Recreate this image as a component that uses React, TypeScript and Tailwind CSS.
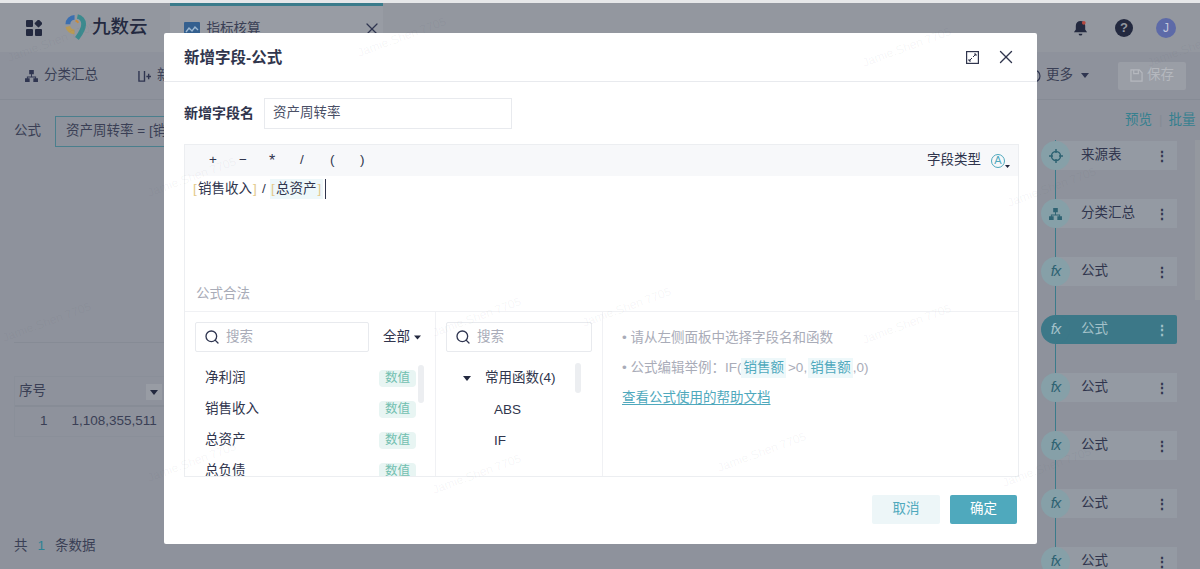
import { Search, X } from "lucide-react";

const font = "font-['Liberation_Sans','Noto_Sans_CJK_SC',sans-serif]";

const marks = [
  [5, 30], [355, 25], [860, 35], [1145, 35],
  [145, 165], [1005, 175],
  [0, 310], [430, 305], [580, 295], [860, 312],
  [145, 450], [715, 440], [430, 462], [1000, 455],
];

function Watermarks() {
  return (
    <>
      {marks.map(([x, y], i) => (
        <span
          key={i}
          className="absolute z-20 -rotate-[20deg] text-[12px] whitespace-nowrap text-[#2f3550]/[0.05] pointer-events-none"
          style={{ left: x, top: y }}
        >
          Jamie.Shen 7705
        </span>
      ))}
    </>
  );
}

function Caret({ className = "" }: { className?: string }) {
  return (
    <svg viewBox="0 0 10 6" className={"w-2 h-[5px] " + className}>
      <path d="M0 0h10L5 6z" fill="currentColor" />
    </svg>
  );
}

function Logo() {
  return (
    <svg viewBox="0 0 22 28" className="w-[21px] h-[27px]">
      <path d="M10 3.500a7 7 0 0 0-7 7" fill="none" stroke="#3b6fb0" strokeWidth="5" />
      <path d="M3 13a7 7 0 0 0 7 5.500" fill="none" stroke="#b89a55" strokeWidth="5" />
      <path d="M13 2.500a8 8 0 0 1 6.500 8c0 6-4 11-7 15" fill="none" stroke="#3c8a8e" strokeWidth="5" />
      <path d="M11 7a4 4 0 0 1 3 2" fill="none" stroke="#c98a3a" strokeWidth="2" />
    </svg>
  );
}

function Header() {
  return (
    <div className="h-[49px] bg-[#93979f] flex items-center pl-[26px] pr-[24px] shrink-0">
      <svg viewBox="0 0 16 16" className="w-4 h-4 text-[#23293f]">
        <rect x="0" y="0" width="7" height="7" rx="1" fill="currentColor" />
        <rect x="9.500" y="0.500" width="6" height="6" rx="1" fill="currentColor" transform="rotate(45 12.5 3.5)" />
        <rect x="0" y="9" width="7" height="7" rx="1" fill="currentColor" />
        <rect x="9" y="9" width="7" height="7" rx="1" fill="currentColor" />
      </svg>
      <div className="ml-[23px] flex items-center gap-[6px]">
        <Logo />
        <span className="text-[18.500px] leading-none text-[#23293f] font-medium">九数云</span>
      </div>
      <div className="ml-[22px] w-[213px] h-full bg-[#989ca4] border-t-[3px] border-[#3a7b8b] flex items-center pl-[14px] pr-[1px] self-stretch">
        <svg viewBox="0 0 16 15" className="w-4 h-[15px]">
          <rect width="16" height="15" rx="1" fill="#35608f" />
          <path d="M2 10l3-4 3 3 3-4 3 3" fill="none" stroke="#9db7d0" strokeWidth="1.400" />
        </svg>
        <span className="ml-[7px] text-[13.500px] text-[#3a3f55]">指标核算</span>
        <X className="ml-auto w-5 h-5 text-[#2f3550]" strokeWidth={1.5} />
      </div>
      <div className="ml-auto flex items-center">
        <svg viewBox="0 0 16 17" className="w-[15px] h-4">
          <path d="M8 1a5 5 0 0 0-5 5v4l-2 3h14l-2-3V6a5 5 0 0 0-5-5z" fill="#23293f" />
          <path d="M6 14.500h4a2 2 0 0 1-4 0z" fill="#23293f" />
          <circle cx="11.500" cy="3" r="2" fill="#b5473f" />
        </svg>
        <span className="ml-[27px] w-[18px] h-[18px] rounded-full bg-[#23293f] text-[#93979f] text-[13px] font-bold flex items-center justify-center">?</span>
        <span className="ml-[23px] w-5 h-5 rounded-full bg-[#5d6aa8] text-[#c4c8dc] text-[12px] flex items-center justify-center">J</span>
      </div>
    </div>
  );
}

function Toolbar() {
  return (
    <div className="h-[48px] flex items-center border-b border-[#868b95] pl-[25px] pr-[14px] shrink-0 text-[13.500px] text-[#3a3f55]">
      <svg viewBox="0 0 14 13" className="w-[13px] h-3 text-[#2f3550]">
        <path d="M4.500 0h5v4.500h-5zM6.500 4.500h1V7h4.500v2h-1V8H3v1H2V7h4.500zM0 9h5v4H0zM9 9h5v4H9z" fill="currentColor" />
      </svg>
      <span className="ml-[6px]">分类汇总</span>
      <svg viewBox="0 0 14 13" className="ml-[40px] w-[13px] h-3 text-[#2f3550]">
        <path d="M1 1v11h6V1M9 7h5M11.500 4v6" fill="none" stroke="currentColor" strokeWidth="1.500" />
      </svg>
      <span className="ml-[6px]">新</span>
      <svg viewBox="0 0 14 14" className="ml-auto w-[14px] h-[14px] text-[#2f3550]">
        <circle cx="7" cy="7" r="6" fill="none" stroke="currentColor" strokeWidth="1.200" />
      </svg>
      <span className="ml-[5px]">更多</span>
      <Caret className="ml-2 text-[#2f3550]" />
      <div className="ml-[29px] w-[68px] h-7 rounded-[2px] bg-[#9a9ea6] flex items-center justify-center gap-1 text-[#b5b8be]">
        <svg viewBox="0 0 14 14" className="w-[13px] h-[13px]">
          <path d="M1 1h9l3 3v9H1zM4 1v4h5V1" fill="none" stroke="currentColor" strokeWidth="1.300" />
        </svg>
        保存
      </div>
    </div>
  );
}

function LeftPanel() {
  return (
    <div className="flex-1 min-w-0 pl-[14px] text-[13.500px] text-[#3a3f55] flex flex-col overflow-hidden">
      <div className="mt-[16px] flex items-center">
        <span>公式</span>
        <div className="ml-[14px] w-[300px] h-[31px] border border-[#4a7f8d] pl-[10px] flex items-center whitespace-nowrap">
          资产周转率 = [销售收入]
        </div>
      </div>
      <div className="mt-[195px] h-px bg-[#868b95] w-[150px]" />
      <div className="mt-[33px] w-[300px] border border-[#8a8f99]">
        <div className="h-[30px] flex items-center pl-1 border-b-2 border-[#878c96] relative">
          序号
          <span className="absolute left-[131px] top-[7px] w-[16px] h-[16px] bg-[#989ca4] flex items-center justify-center">
            <Caret className="text-[#23293f]" />
          </span>
        </div>
        <div className="h-[29px] flex items-center whitespace-nowrap">
          <span className="ml-[25px]">1</span>
          <span className="ml-[24px]">1,108,355,511</span>
        </div>
      </div>
      <div className="mt-[99px] flex items-center">
        共<span className="mx-[10px] text-[#2c8294]">1</span>条数据
      </div>
    </div>
  );
}

const nodes = ["来源表", "分类汇总", "公式", "公式", "公式", "公式", "公式", "公式"];

function NodeIcon({ i, active }: { i: number; active: boolean }) {
  const color = active ? "text-[#a3c1c9]" : "text-[#2f6373]";
  if (i === 0) {
    return (
      <svg viewBox="0 0 14 14" className={"w-[14px] h-[14px] " + color}>
        <circle cx="7" cy="7" r="4.500" fill="none" stroke="currentColor" strokeWidth="1.500" />
        <path d="M7 0v4M7 10v4M0 7h4M10 7h4" stroke="currentColor" strokeWidth="1.500" />
      </svg>
    );
  }
  if (i === 1) {
    return (
      <svg viewBox="0 0 14 13" className={"w-[13px] h-3 " + color}>
        <path d="M4.500 0h5v4.500h-5zM6.500 4.500h1V7h4.500v2h-1V8H3v1H2V7h4.500zM0 9h5v4H0zM9 9h5v4H9z" fill="currentColor" />
      </svg>
    );
  }
  return <span className={"italic text-[15px] tracking-[-1px] " + color}>fx</span>;
}

function FlowPanel() {
  return (
    <div className="w-[170px] shrink-0 flex flex-col relative">
      <div className="h-[36px] flex items-start pl-[95px] pt-[10px] text-[13.500px] text-[#35808f] shrink-0 whitespace-nowrap">
        预览
        <span className="ml-[7px] mr-[6px] text-[#868b95]">|</span>
        批量
      </div>
      <div className="absolute left-[25px] top-[40px] bottom-0 w-px bg-[#3a7b8b]" />
      <div className="flex flex-col gap-[29px] pl-[11px] pr-[23px] mt-[5px]">
        {nodes.map((n, i) => {
          const active = i === 3;
          return (
            <div key={i} className="relative h-[29px] shrink-0 flex items-center">
              <div className={"absolute left-[15px] right-0 inset-y-0 " + (active ? "bg-[#3c7888] rounded-r-[2px]" : "bg-[#949aa3]")} />
              <span className={"relative w-[29px] h-[29px] rounded-full flex items-center justify-center " + (active ? "bg-[#3c7888]" : "bg-[#86a0a8]")}>
                <NodeIcon i={i} active={active} />
              </span>
              <span className={"relative ml-[11px] text-[13.500px] " + (active ? "text-[#a3c1c9]" : "text-[#30354d]")}>{n}</span>
              <span className={"relative ml-auto mr-[8px] text-[14px] font-bold leading-none " + (active ? "text-[#a3c1c9]" : "text-[#30354d]")}>⋮</span>
            </div>
          );
        })}
      </div>
      <div className="absolute right-0 top-[40px] h-[160px] w-[5px] bg-[#94989f]" />
    </div>
  );
}

function SearchBox({ className }: { className: string }) {
  return (
    <div className={"h-[30px] border border-[#e8eaee] rounded-[2px] flex items-center pl-[8px] " + className}>
      <Search className="w-4 h-4 text-[#2f3550]" strokeWidth={2} />
      <span className="ml-[6px] text-[13.500px] text-[#a9acb8]">搜索</span>
    </div>
  );
}

function Token({ children }: { children: string }) {
  return (
    <span className="inline-flex items-center">
      <span className="w-[6px] text-center text-[#e3c98a]">[</span>
      {children}
      <span className="w-[6px] text-center text-[#e3c98a]">]</span>
    </span>
  );
}

const fields = ["净利润", "销售收入", "总资产", "总负债"];

function Dialog() {
  return (
    <div className="absolute z-10 left-[164px] top-[30px] w-[873px] h-[511px] bg-white rounded-[2px] flex flex-col text-[#30354d]">
      <div className="h-[49px] border-b border-[#e8eaee] flex items-center pl-[20px] pr-[20px] shrink-0">
        <span className="pt-[2px] text-[15.500px] font-bold">新增字段-公式</span>
        <svg viewBox="0 0 13 13" className="ml-auto w-[13px] h-[13px] text-[#30354d]">
          <rect x="0.600" y="0.600" width="11.800" height="11.800" fill="none" stroke="currentColor" strokeWidth="1.200" />
          <path d="M7 6l3-3M8 3h2v2M6 7l-3 3M3 8v2h2" fill="none" stroke="currentColor" />
        </svg>
        <X className="ml-[16px] w-[22px] h-[22px] text-[#30354d]" strokeWidth={1.5} />
      </div>

      <div className="mt-[16px] pl-[20px] flex items-center shrink-0">
        <span className="w-[80px] text-[14px] font-bold">新增字段名</span>
        <div className="w-[248px] h-[31px] border border-[#e8eaee] pl-[8px] flex items-center text-[13.500px] text-[#4a4f66]">资产周转率</div>
      </div>

      <div className="mt-[15px] ml-[20px] w-[835px] h-[333px] border border-[#eceef1] flex flex-col shrink-0">
        <div className="h-[31px] bg-[#f7f8fa] flex items-center pl-[24px] pr-[8px] shrink-0 text-[13.500px]">
          <span className="w-[30px]">+</span>
          <span className="w-[30px]">−</span>
          <span className="w-[31px] text-[16px] leading-none">*</span>
          <span className="w-[30px]">/</span>
          <span className="w-[30px]">(</span>
          <span>)</span>
          <span className="ml-auto">字段类型</span>
          <span className="ml-[10px] w-[14px] h-[14px] rounded-full border border-[#4fa9bd] text-[#4fa9bd] text-[11px] leading-none flex items-center justify-center">A</span>
          <Caret className="mt-[12px] w-[5px] h-[3px] text-[#23293f]" />
        </div>
        <div className="h-[102px] pl-[7px] pt-[1px] text-[13.500px] shrink-0 flex items-start">
          <div className="flex items-center h-[24px]">
            <Token>销售收入</Token>
            <span className="w-[12px] text-center">/</span>
            <span className="bg-[#eef8fa] inline-flex"><Token>总资产</Token></span>
            <span className="ml-[2px] w-px h-[20px] bg-[#30354d]" />
          </div>
        </div>
        <div className="h-[34px] pl-[11px] flex items-center text-[13.500px] text-[#a9acb8] shrink-0 border-b border-[#f0f1f4]">公式合法</div>

        <div className="flex-1 min-h-0 flex overflow-hidden">
          <div className="w-[251px] border-r border-[#f0f1f4] pl-[10px] pt-[10px] shrink-0 relative">
            <div className="flex items-center">
              <SearchBox className="w-[174px]" />
              <span className="ml-[14px] text-[13.500px]">全部</span>
              <Caret className="ml-1 w-[7px] text-[#23293f]" />
            </div>
            <div className="mt-[18px] flex flex-col gap-[14px] pl-[10px] pr-[19px]">
              {fields.map((f) => (
                <div key={f} className="h-[17px] flex items-center justify-between shrink-0">
                  <span className="text-[13.500px]">{f}</span>
                  <span className="w-[37px] h-[17px] rounded-[4px] bg-[#e8f5f3] text-[#72bfb0] text-[12.500px] flex items-center justify-center">数值</span>
                </div>
              ))}
            </div>
            <div className="absolute left-[233px] top-[53px] w-[6px] h-[38px] rounded-full bg-[#eceef1]" />
          </div>
          <div className="w-[167px] border-r border-[#f0f1f4] pl-[10px] pt-[10px] shrink-0 relative">
            <SearchBox className="w-[146px]" />
            <div className="mt-[18px] pl-[17px] h-[17px] flex items-center">
              <Caret className="text-[#23293f]" />
              <span className="ml-[14px] text-[13.500px]">常用函数(4)</span>
            </div>
            <div className="mt-[14px] pl-[48px] text-[13.500px] leading-[17px]">ABS</div>
            <div className="mt-[14px] pl-[48px] text-[13.500px] leading-[17px]">IF</div>
            <div className="absolute left-[139px] top-[51px] w-[6px] h-[30px] rounded-full bg-[#eceef1]" />
          </div>
          <div className="flex-1 pl-[19px] pt-[16px] text-[13.500px] text-[#a9acb8]">
            <div className="h-[20px] flex items-center">• 请从左侧面板中选择字段名和函数</div>
            <div className="mt-[10px] h-[20px] flex items-center">
              • 公式编辑举例：IF(
              <span className="bg-[#eef8fa] text-[#4fa9bd] px-[2px]">销售额</span>
              <span className="ml-[2px] mr-[1px]">&gt;0,</span>
              <span className="bg-[#eef8fa] text-[#4fa9bd] px-[2px]">销售额</span>
              <span>,0)</span>
            </div>
            <div className="mt-[10px] h-[20px] flex items-center text-[#4fa9bd] underline underline-offset-2">查看公式使用的帮助文档</div>
          </div>
        </div>
      </div>

      <div className="mt-[18px] pr-[20px] flex justify-end gap-[10px] text-[13.500px]">
        <button className="w-[68px] h-[29px] bg-[#edf6f8] text-[#4fa9bd] rounded-[2px]">取消</button>
        <button className="w-[67px] h-[29px] bg-[#4fa9bd] text-white rounded-[2px]">确定</button>
      </div>
    </div>
  );
}

export default function App() {
  return (
    <div className={"relative w-[1200px] h-[569px] overflow-hidden bg-[#8e929c] border-t-[3px] border-[#e6e7e9] flex flex-col " + font}>
      <Header />
      <Toolbar />
      <div className="flex-1 min-h-0 flex">
        <LeftPanel />
        <FlowPanel />
      </div>
      <Dialog />
      <Watermarks />
    </div>
  );
}
